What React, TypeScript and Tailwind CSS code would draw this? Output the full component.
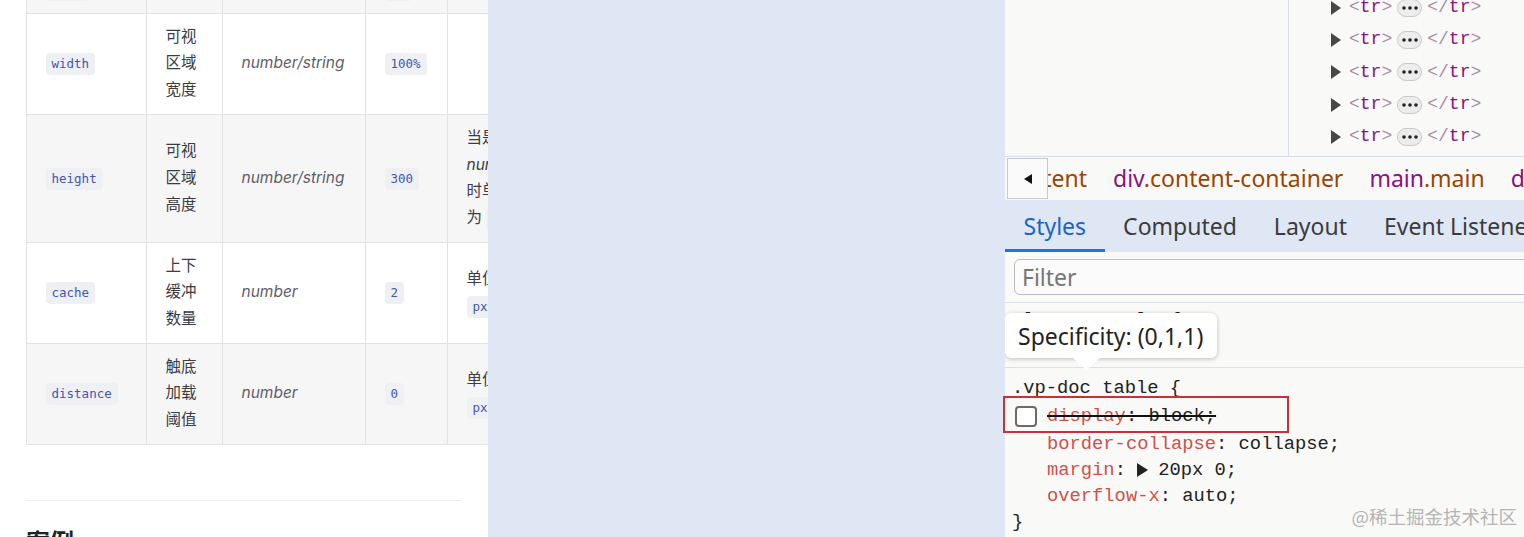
import type { ReactNode } from 'react'

const Code = ({ children }: { children: ReactNode }) => (
  <span className="inline-block rounded-[4px] bg-[#eef0f3] px-[6px] py-[3px] font-['DejaVu_Sans_Mono',monospace] text-[12.5px] leading-[16px] text-[#4356b0]">
    {children}
  </span>
)

type Row = {
  name: string
  desc: string
  type: string
  def: string
  note: ReactNode[]
  gray: boolean
}

const rows: Row[] = [
  { name: 'width', desc: '可视区域宽度', type: 'number/string', def: '100%', note: [], gray: false },
  {
    name: 'height',
    desc: '可视区域高度',
    type: 'number/string',
    def: '300',
    note: ['当是', <em key="n">number</em>, '时单位', <span key="p">为 <Code>px</Code></span>],
    gray: true,
  },
  { name: 'cache', desc: '上下缓冲数量', type: 'number', def: '2', note: ['单位', <Code key="p">px</Code>], gray: false },
  { name: 'distance', desc: '触底加载阈值', type: 'number', def: '0', note: ['单位', <Code key="p">px</Code>], gray: true },
]

const cell = 'border border-[#e2e2e3] px-[18.5px] py-[10px] align-middle'

function DocPanel() {
  return (
    <div className="h-full w-[488px] flex-none overflow-hidden bg-white font-['Inter','Noto_Sans_CJK_SC',sans-serif] text-[15.5px] leading-[26.7px] text-[#3c3c43]">
      <table className="ml-[26px] mt-[-35px] w-[517px] table-fixed">
        <colgroup>
          <col className="w-[120px]" />
          <col className="w-[76px]" />
          <col className="w-[143px]" />
          <col className="w-[82px]" />
          <col className="w-[96px]" />
        </colgroup>
        <tbody>
          <tr className="h-[40px] bg-[#f6f6f7]">
            <td className={cell}><Code>data</Code></td>
            <td className={cell}></td>
            <td className={cell}></td>
            <td className={cell}><Code>[]</Code></td>
            <td className={cell}></td>
          </tr>
          {rows.map((r) => (
            <tr key={r.name} className={r.gray ? 'bg-[#f6f6f7]' : 'bg-white'}>
              <td className={cell}><Code>{r.name}</Code></td>
              <td className={cell}>{r.desc}</td>
              <td className={cell}><em className="text-[#5e5e66]">{r.type}</em></td>
              <td className={cell}><Code>{r.def}</Code></td>
              <td className={cell + ' whitespace-nowrap'}>
                {r.note.map((n, i) => (
                  <div key={i}>{n}</div>
                ))}
              </td>
            </tr>
          ))}
        </tbody>
      </table>
      <div className="ml-[26px] mt-[55px] h-px w-[435px] bg-[#ececee]" />
      <h2 className="ml-[26px] mt-[26px] text-[24px] font-bold leading-[32px] text-[#222]">案例</h2>
    </div>
  )
}

function TrRow() {
  return (
    <div className="flex h-[32.3px] flex-none items-center font-['Liberation_Mono',monospace] text-[18px]">
      <svg width="10" height="14" viewBox="0 0 10 14" className="mr-[8px]">
        <path d="M0 0 L10 7 L0 14 Z" fill="#474747" />
      </svg>
      <span className="text-[#a88ea3]">&lt;</span>
      <span className="text-[#881280]">tr</span>
      <span className="text-[#a88ea3]">&gt;</span>
      <span className="mx-[5px] flex h-[18px] w-[25px] items-center justify-center rounded-full border border-[#c9c9c9] bg-[#ececec]">
        <svg width="16" height="4" viewBox="0 0 16 4">
          <circle cx="2" cy="2" r="1.8" fill="#222" />
          <circle cx="8" cy="2" r="1.8" fill="#222" />
          <circle cx="14" cy="2" r="1.8" fill="#222" />
        </svg>
      </span>
      <span className="text-[#a88ea3]">&lt;/</span>
      <span className="text-[#881280]">tr</span>
      <span className="text-[#a88ea3]">&gt;</span>
    </div>
  )
}

function DevTools() {
  const tabs = ['Styles', 'Computed', 'Layout', 'Event Listeners']
  return (
    <div className="flex h-full w-[519px] flex-none flex-col overflow-hidden bg-[#f9f9f8] font-['Noto_Sans',sans-serif] text-[#333]">
      {/* dom tree */}
      <div className="flex h-[157px] flex-none border-b border-[#d8dcef]">
        <div className="w-[284px] flex-none border-r border-[#d8dcef]" />
        <div className="flex flex-1 flex-col justify-end overflow-hidden pb-[3px] pl-[42px]">
          {[0, 1, 2, 3, 4].map((i) => (
            <TrRow key={i} />
          ))}
        </div>
      </div>

      {/* breadcrumbs */}
      <div className="flex h-[43px] flex-none items-center whitespace-nowrap text-[23px]">
        <div className="ml-[2px] flex h-[41px] w-[41px] flex-none items-center justify-center border border-[#c8c8c8] bg-[#fafafa]">
          <svg width="8" height="10" viewBox="0 0 8 10">
            <path d="M8 0 L0 5 L8 10 Z" fill="#111" />
          </svg>
        </div>
        <div className="flex items-center gap-[26px] overflow-hidden">
          <span className="flex w-[39px] flex-none justify-end overflow-hidden">
            <span className="flex-none">
              <span className="text-[#881280]">div</span>
              <span className="text-[#994500]">.content</span>
            </span>
          </span>
          <span className="flex-none">
            <span className="text-[#881280]">div</span>
            <span className="text-[#994500]">.content-container</span>
          </span>
          <span className="flex-none">
            <span className="text-[#881280]">main</span>
            <span className="text-[#994500]">.main</span>
          </span>
          <span className="flex-none">
            <span className="text-[#881280]">div</span>
            <span className="text-[#994500]">.VPContent</span>
          </span>
        </div>
      </div>

      {/* tabs */}
      <div className="flex h-[52px] flex-none whitespace-nowrap bg-[#dfe7f5] text-[23px]">
        {tabs.map((t, i) => (
          <div
            key={t}
            className={
              i === 0
                ? 'flex items-center border-y-[3px] border-t-transparent border-b-[#1a73e8] px-[18.5px] text-[#1b63c9]'
                : 'flex items-center border-y-[3px] border-transparent px-[18.5px] text-[#3b3b3b]'
            }
          >
            {t}
          </div>
        ))}
      </div>

      {/* filter */}
      <div className="flex h-[51px] flex-none overflow-hidden border-b border-[#dcdfee] pl-[9px] pt-[7px]">
        <div className="flex h-[36px] w-[540px] flex-none items-center rounded-[6px] border border-[#bdbdbd] bg-[#fbfbfb] pl-[7px] text-[23px] text-[#767676]">
          Filter
        </div>
      </div>

      {/* styles */}
      <div className="relative flex-1 font-['Liberation_Mono',monospace] text-[18.8px] leading-[26px] text-[#222]">
        <div className="border-b border-[#dcdfee] pb-[8px] pl-[7px] pt-[4px]">
          <div>element.style {'{'}</div>
          <div>{'}'}</div>
        </div>
        <div className="pl-[7px] pt-[7px]">
          <div>.vp-doc table {'{'}</div>
          <div className="flex h-[30px] items-center">
            <span className="ml-[3px] mr-[10px] h-[21px] w-[22px] flex-none rounded-[4px] border-2 border-[#6b6b6b] bg-white" />
            <span className="line-through decoration-[#111] decoration-[2px]">
              <span className="text-[#d0504a]">display</span>: block;
            </span>
          </div>
          <div className="pl-[35px]">
            <span className="text-[#d0504a]">border-collapse</span>: collapse;
          </div>
          <div className="flex items-center pl-[35px]">
            <span className="text-[#d0504a]">margin</span>
            <span>:&nbsp;</span>
            <svg width="11" height="14" viewBox="0 0 11 14" className="mr-[10px]">
              <path d="M0 0 L11 7 L0 14 Z" fill="#222" />
            </svg>
            <span>20px 0;</span>
          </div>
          <div className="pl-[35px]">
            <span className="text-[#d0504a]">overflow-x</span>: auto;
          </div>
          <div>{'}'}</div>
        </div>

        {/* specificity tooltip */}
        <div className="absolute left-0 top-[10px] flex h-[45px] w-[212px] items-center rounded-[6px] bg-white pl-[13px] font-['Noto_Sans',sans-serif] text-[23px] text-[#222] shadow-[0_1px_4px_rgba(0,0,0,0.25)]">
          Specificity: (0,1,1)
          <svg width="27" height="12" viewBox="0 0 27 12" className="absolute left-[68px] top-[45px]">
            <path d="M0 0 L13.5 12 L27 0 Z" fill="#fff" />
          </svg>
        </div>
      </div>
    </div>
  )
}

export default function App() {
  return (
    <div className="relative flex h-[537px] w-[1524px] overflow-hidden">
      <DocPanel />
      <div className="h-full w-[517px] flex-none bg-[#dfe6f4]" />
      <DevTools />

      {/* annotation box */}
      <div className="absolute left-[1003px] top-[396px] h-[37px] w-[286px] border-2 border-[#cc2f3a]" />
      <div className="absolute bottom-[6px] right-[7px] font-['Noto_Sans_CJK_SC',sans-serif] text-[18.5px] text-[#b5b5b5]">
        @稀土掘金技术社区
      </div>
    </div>
  )
}
